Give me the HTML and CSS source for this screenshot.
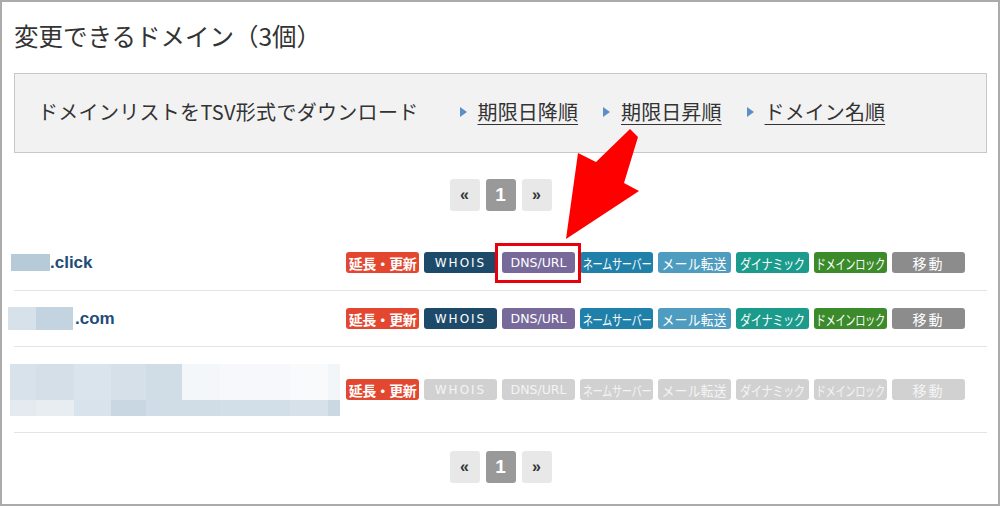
FILE: index.html
```html
<!DOCTYPE html>
<html lang="ja">
<head>
    <meta charset="UTF-8">
    <meta name="viewport" content="width=device-width, initial-scale=1.0">
    <title>変更できるドメイン</title>
    <link rel="stylesheet" href="styles.css">
</head>
<body>
    <div class="page">
        <h1 class="title">変更できるドメイン（3個）</h1>

        <div class="download-box">
            <span class="download-label">ドメインリストをTSV形式でダウンロード</span>
            <a class="sort-link first" href="#">期限日降順</a>
            <a class="sort-link" href="#">期限日昇順</a>
            <a class="sort-link" href="#">ドメイン名順</a>
        </div>

        <div class="pager">
            <span class="pager-btn">«</span>
            <span class="pager-btn active">1</span>
            <span class="pager-btn">»</span>
        </div>

        <div class="domain-list">
            <div class="domain-row">
                <div class="domain-name">
                    <span class="mask mask-a"></span><span class="tld">.click</span>
                </div>
                <div class="actions">
                    <span class="act renew">延長・更新</span>
                    <span class="act whois">WHOIS</span>
                    <span class="act dns">DNS/URL</span>
                    <span class="act ns"><span class="squeeze">ネームサーバー</span></span>
                    <span class="act mail"><span class="squeeze wide">メール転送</span></span>
                    <span class="act dyn"><span class="squeeze mid">ダイナミック</span></span>
                    <span class="act lock"><span class="squeeze">ドメインロック</span></span>
                    <span class="act move">移動</span>
                </div>
            </div>

            <div class="domain-row">
                <div class="domain-name">
                    <span class="mask mask-b"></span><span class="mask mask-c"></span><span class="tld">.com</span>
                </div>
                <div class="actions">
                    <span class="act renew">延長・更新</span>
                    <span class="act whois">WHOIS</span>
                    <span class="act dns">DNS/URL</span>
                    <span class="act ns"><span class="squeeze">ネームサーバー</span></span>
                    <span class="act mail"><span class="squeeze wide">メール転送</span></span>
                    <span class="act dyn"><span class="squeeze mid">ダイナミック</span></span>
                    <span class="act lock"><span class="squeeze">ドメインロック</span></span>
                    <span class="act move">移動</span>
                </div>
            </div>

            <div class="domain-row tall">
                <div class="domain-name name-long">
                    <div class="mask-long top"></div>
                    <div class="mask-long bottom"></div>
                </div>
                <div class="actions">
                    <span class="act renew">延長・更新</span>
                    <span class="act off whois">WHOIS</span>
                    <span class="act off dns">DNS/URL</span>
                    <span class="act off"><span class="squeeze">ネームサーバー</span></span>
                    <span class="act off"><span class="squeeze wide">メール転送</span></span>
                    <span class="act off"><span class="squeeze mid">ダイナミック</span></span>
                    <span class="act off"><span class="squeeze">ドメインロック</span></span>
                    <span class="act off move">移動</span>
                </div>
            </div>
        </div>

        <div class="pager bottom-pager">
            <span class="pager-btn">«</span>
            <span class="pager-btn active">1</span>
            <span class="pager-btn">»</span>
        </div>

        <!-- 注釈 -->
        <div class="highlight"></div>
        <svg class="arrow" width="85" height="120" viewBox="0 0 85 120">
            <polygon points="70,4 36,37 18,28 6,114 79,66 64,58 78,12" fill="#ff0000"/>
        </svg>
    </div>
</body>
</html>
```

FILE: styles.css
```css
* {
    margin: 0;
    padding: 0;
    box-sizing: border-box;
}

body {
    font-family: 'Liberation Sans', 'Noto Sans CJK JP', sans-serif;
    color: #333;
    background: #fff;
}

.page {
    position: relative;
    width: 1000px;
    height: 506px;
    border: 2px solid #ababab;
    padding: 18px 11px 0 12px;
    overflow: hidden;
}

.title {
    font-family: 'Noto Sans CJK JP', sans-serif;
    font-weight: normal;
    font-size: 24.5px;
    line-height: 32px;
    margin-bottom: 21px;
    color: #333;
}

.download-box {
    display: flex;
    align-items: center;
    height: 80px;
    padding-left: 23px;
    padding-bottom: 3px;
    background: #f2f2f2;
    border: 1px solid #c8c8c8;
    font-family: 'Noto Sans CJK JP', sans-serif;
    font-size: 20px;
}

.download-label {
    letter-spacing: 0.3px;
    margin-right: 41px;
}

.sort-link {
    display: flex;
    align-items: center;
    color: #333;
    text-decoration: underline;
    text-underline-offset: 4px;
    text-decoration-thickness: 1px;
    letter-spacing: 0.1px;
    margin-left: 25px;
}

.sort-link.first {
    margin-left: 0;
}

.sort-link::before {
    content: '';
    width: 0;
    height: 0;
    border-top: 5px solid transparent;
    border-bottom: 5px solid transparent;
    border-left: 7px solid #5a8fc8;
    margin-right: 11px;
}

.pager {
    display: flex;
    justify-content: center;
    gap: 6px;
    margin-top: 26px;
}

.pager-btn {
    width: 30px;
    height: 32px;
    border-radius: 3px;
    background: #e8e8e8;
    display: flex;
    align-items: center;
    justify-content: center;
    font-size: 16px;
    font-weight: bold;
    color: #333;
}

.pager-btn.active {
    background: #999;
    color: #fff;
    font-size: 19px;
}

.domain-list {
    margin-top: 24px;
}

.domain-row {
    display: flex;
    align-items: center;
    height: 56px;
    border-bottom: 1px solid #e4e4e4;
}

.domain-row.tall {
    height: 86px;
}

.domain-name {
    display: flex;
    align-items: center;
    margin-left: -6px;
    font-size: 17px;
    font-weight: bold;
    color: #1d4d7a;
}

.tld {
    line-height: 20px;
}

.mask {
    display: inline-block;
    height: 17px;
}

.mask-a {
    width: 39px;
    margin-left: 3px;
    background: #b7cad8;
}

.mask-b {
    width: 28px;
    height: 23px;
    background: #d6e1e9;
}

.mask-c {
    width: 37px;
    height: 23px;
    margin-right: 2px;
    background: #c3d3df;
}

.name-long {
    flex-direction: column;
    align-items: flex-start;
    margin-left: -4px;
}

.mask-long {
    width: 330px;
}

.mask-long.top {
    height: 36px;
    background: linear-gradient(to right,
        #d8e2eb 0 26px, #d4dfe8 26px 64px, #dae4ec 64px 101px,
        #d5e0e9 101px 136px, #d0dce6 136px 172px,
        #f4f7fa 172px 210px, #f6f8fb 210px 280px, #f8fafc 280px 318px, #f3f6f9 318px 330px);
}

.mask-long.bottom {
    height: 16px;
    background: linear-gradient(to right,
        #e4eaef 0 26px, #e8edf1 26px 64px, #d9e3eb 64px 101px,
        #c8d7e2 101px 136px, #d1dde6 136px 210px,
        #d3dfe8 210px 280px, #d6e1e9 280px 318px, #c9d8e3 318px 330px);
}

.actions {
    display: flex;
    gap: 5px;
    margin-left: auto;
    margin-right: 22px;
}

.act {
    width: 73px;
    height: 21px;
    border-radius: 3px;
    display: flex;
    align-items: center;
    justify-content: center;
    font-family: 'Noto Sans CJK JP', sans-serif;
    font-size: 13px;
    color: #fff;
    white-space: nowrap;
    overflow: hidden;
}

.squeeze {
    display: inline-block;
    font-size: 14px;
    letter-spacing: -0.5px;
    transform: scaleX(0.73);
}

.squeeze.mid {
    transform: scaleX(0.8);
}

.squeeze.wide {
    letter-spacing: 0.5px;
    transform: scaleX(0.9);
}

.renew {
    background: #e3472f;
    font-size: 14px;
    font-weight: bold;
    letter-spacing: -0.5px;
}

.whois {
    background: #1e4a6a;
    letter-spacing: 2px;
    font-family: 'DejaVu Sans', sans-serif;
    font-size: 12px;
}

.dns {
    background: #77699a;
    font-family: 'DejaVu Sans', sans-serif;
    font-size: 12.5px;
}

.ns {
    background: #1f80aa;
}

.mail {
    background: #4e9dc0;
}

.dyn {
    background: #1a9b8c;
}

.lock {
    background: #3b8b2b;
}

.move {
    background: #8c8c8c;
    letter-spacing: 2px;
    font-size: 14px;
}

.act.off {
    background: #d1d1d1;
    color: #f4f4f4;
}

.bottom-pager {
    margin-top: 18px;
}

.highlight {
    position: absolute;
    left: 493px;
    top: 241px;
    width: 86px;
    height: 40px;
    border: 3px solid #e8000b;
}

.arrow {
    position: absolute;
    left: 558px;
    top: 123px;
}
```
